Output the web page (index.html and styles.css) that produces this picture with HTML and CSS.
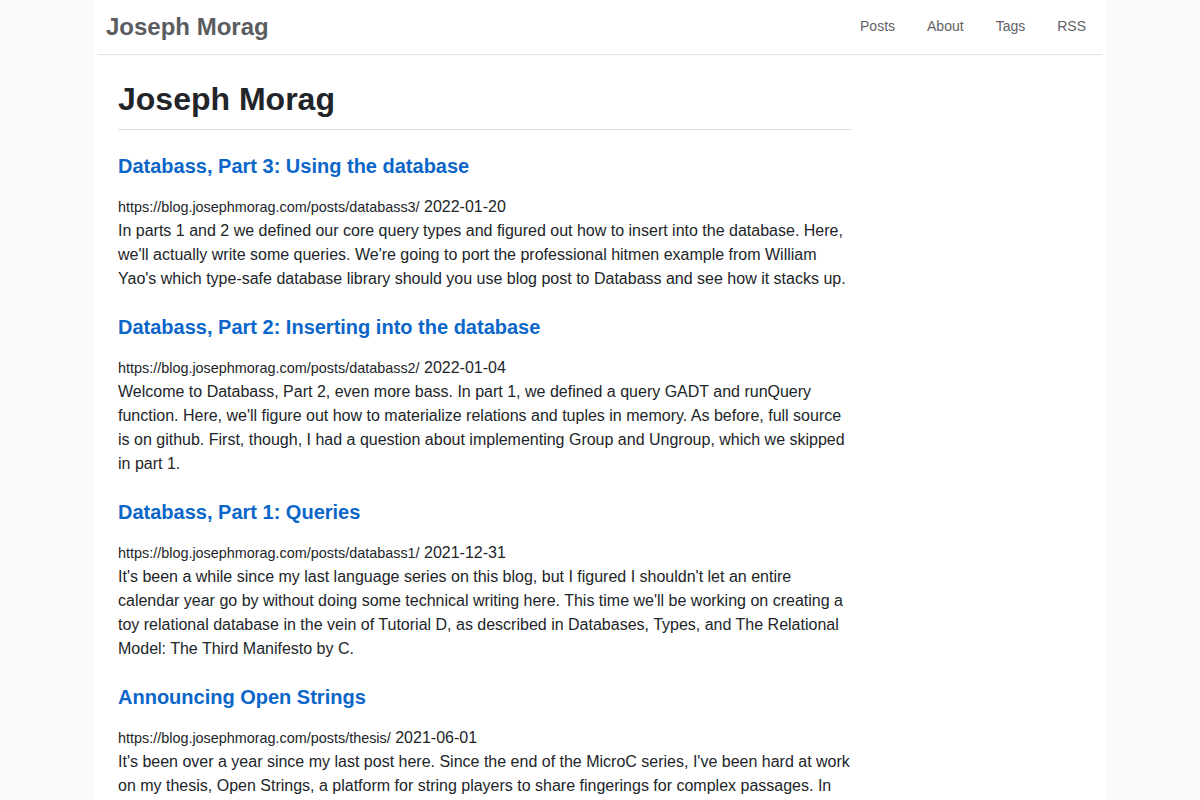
FILE: index.html
```html
<!DOCTYPE html>
<html>
  <head>
    <title>Joseph Morag</title>
    <meta charset="utf-8"/>
    <link rel="stylesheet" href="styles.css">
  </head>
  <body>
    <div class="page">
      <nav class="navbar">
        <a class="brand" href="#">Joseph Morag</a>
        <ul class="nav-links">
          <li><a href="#">Posts</a></li>
          <li><a href="#">About</a></li>
          <li><a href="#">Tags</a></li>
          <li><a href="#">RSS</a></li>
        </ul>
      </nav>

      <main class="content">
        <header class="page-header">
          <h1>Joseph Morag</h1>
        </header>

        <article class="post">
          <h2><a href="#">Databass, Part 3: Using the database</a></h2>
          <div class="meta"><span class="url">https://blog.josephmorag.com/posts/databass3/</span> 2022-01-20</div>
          <p>In parts 1 and 2 we defined our core query types and figured out how to insert into the database. Here, we'll actually write some queries. We're going to port the professional hitmen example from William Yao's which type-safe database library should you use blog post to Databass and see how it stacks up.</p>
        </article>

        <article class="post">
          <h2><a href="#">Databass, Part 2: Inserting into the database</a></h2>
          <div class="meta"><span class="url">https://blog.josephmorag.com/posts/databass2/</span> 2022-01-04</div>
          <p>Welcome to Databass, Part 2, even more bass. In part 1, we defined a query GADT and runQuery function. Here, we'll figure out how to materialize relations and tuples in memory. As before, full source is on github. First, though, I had a question about implementing Group and Ungroup, which we skipped in part 1.</p>
        </article>

        <article class="post">
          <h2><a href="#">Databass, Part 1: Queries</a></h2>
          <div class="meta"><span class="url">https://blog.josephmorag.com/posts/databass1/</span> 2021-12-31</div>
          <p>It's been a while since my last language series on this blog, but I figured I shouldn't let an entire calendar year go by without doing some technical writing here. This time we'll be working on creating a toy relational database in the vein of Tutorial D, as described in Databases, Types, and The Relational Model: The Third Manifesto by C.</p>
        </article>

        <article class="post">
          <h2><a href="#">Announcing Open Strings</a></h2>
          <div class="meta"><span class="url">https://blog.josephmorag.com/posts/thesis/</span> 2021-06-01</div>
          <p>It's been over a year since my last post here. Since the end of the MicroC series, I've been hard at work on my thesis, Open Strings, a platform for string players to share fingerings for complex passages. In the process of building it, I learned a great deal about web development, databases and deployment.</p>
        </article>
      </main>
    </div>
  </body>
</html>
```

FILE: styles.css
```css
body {
  margin: 0;
  background-color: #f8f9fa;
  color: #212529;
  font-family: "Liberation Sans", Arial, sans-serif;
  font-size: 16px;
  line-height: 24px;
}
a {
  text-decoration: none;
}

.page {
  width: 1004px;
  margin: 0 auto;
  padding: 0 4px;
  background-color: #fff;
  min-height: 800px;
}

/* top bar */
.navbar {
  display: flex;
  align-items: center;
  justify-content: space-between;
  height: 54px;
  border-bottom: 1px solid #e1e3e5;
}
.brand {
  padding-left: 8px;
  font-size: 24px;
  font-weight: bold;
  color: #5a5c5f;
}
.nav-links {
  display: flex;
  margin: 0 0 2px;
  padding: 0;
  list-style: none;
}
.nav-links a {
  display: block;
  padding: 0 16px;
  font-size: 14px;
  color: #5f6266;
}

/* post list */
.content {
  width: 734px;
  padding: 25px 20px 0;
}
.page-header {
  padding-bottom: 11px;
  border-bottom: 1px solid #dfe2e5;
}
.page-header h1 {
  margin: 0;
  font-size: 32px;
  line-height: 38px;
}
.post {
  margin-top: 24px;
}
.post h2 {
  margin: 0 0 17px;
  font-size: 20px;
  line-height: 24px;
}
.post h2 a {
  color: #0b66c9;
}
.meta .url {
  font-size: 14.4px;
}
.post p {
  margin: 0;
}
```
